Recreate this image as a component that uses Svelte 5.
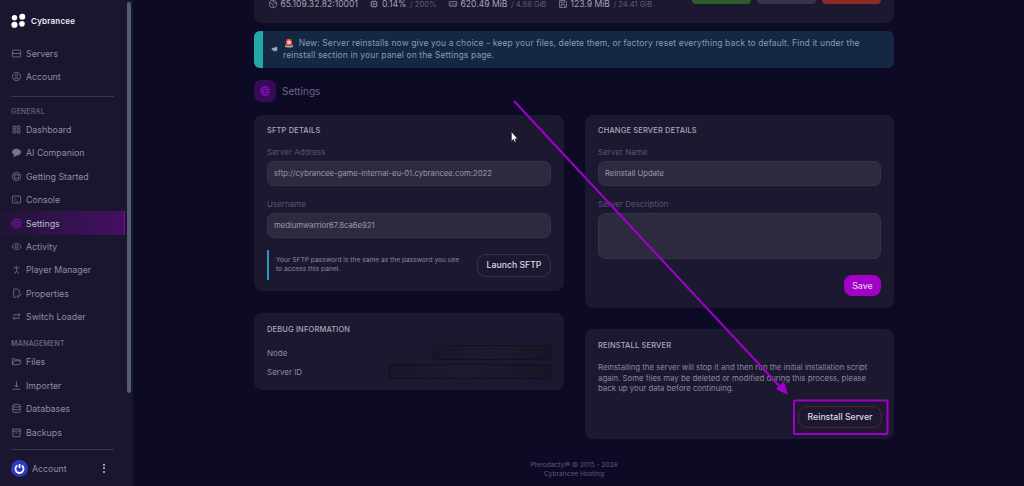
<script>
  const nav1 = [
    { label: 'Dashboard', d: 'M3 3h4v4H3zM9 3h4v4H9zM3 9h4v4H3zM9 9h4v4H9z' },
    { label: 'AI Companion', d: 'M8 3c3.300 0 6 2 6 4.500S11.300 12 8 12l-4 2 1-3C3 10 2 8.800 2 7.500 2 5 4.700 3 8 3z', fill: true },
    { label: 'Getting Started', d: 'M8 2a6 6 0 1 0 0 12A6 6 0 0 0 8 2zM8 5a3 3 0 1 0 0 6 3 3 0 0 0 0-6zM4 4l2 2M12 4l-2 2M4 12l2-2M12 12l-2-2' },
    { label: 'Console', d: 'M3 3h10a1 1 0 0 1 1 1v8a1 1 0 0 1-1 1H3a1 1 0 0 1-1-1V4a1 1 0 0 1 1-1zM5 6l2 2-2 2M8 10.500h2' },
    { label: 'Settings', active: true, d: 'M8 2a6 6 0 1 0 0 12A6 6 0 0 0 8 2zM8 5.500a2.500 2.500 0 1 0 0 5 2.500 2.500 0 0 0 0-5z' },
    { label: 'Activity', d: 'M1.500 8S4 3.500 8 3.500 14.500 8 14.500 8 12 12.500 8 12.500 1.500 8 1.500 8zM8 6a2 2 0 1 0 0 4 2 2 0 0 0 0-4z' },
    { label: 'Player Manager', d: 'M8 2v1.500M3.500 5.500h9M8 5.500v4M8 9.500L5.500 14M8 9.500l2.500 4.500' },
    { label: 'Properties', d: 'M12 7V4l-2.500-2.500H4v12h3.500M9 13.500l.5-2L13 8l1.500 1.500-3.500 3.500z' },
    { label: 'Switch Loader', d: 'M3 5.500h10M10.500 3L13 5.500 10.500 8M13 10.500H3M5.500 8L3 10.500 5.500 13' }
  ];
  const nav2 = [
    { label: 'Files', d: 'M2 12.500V4h4l1 1.500h6V7M2 12.500h10.500L14.500 7H4.500z' },
    { label: 'Importer', d: 'M8 2v8M5 7.500l3 3 3-3M2.500 13.500h11' },
    { label: 'Databases', d: 'M2.500 4c0-1.200 2.500-2 5.500-2s5.500.8 5.500 2v8c0 1.200-2.500 2-5.500 2s-5.500-.8-5.500-2zM2.500 4c0 1.200 2.500 2 5.500 2s5.500-.8 5.500-2M2.500 8c0 1.200 2.500 2 5.500 2s5.500-.8 5.500-2' },
    { label: 'Backups', d: 'M2 3h12v3H2zM3 6v8h10V6M6.500 9h3' }
  ];
</script>

{#snippet item(n)}
  <div class="nav" class:active={n.active}>
    <svg viewBox="0 0 16 16" class="ic" class:filled={n.fill}><path d={n.d} /></svg>
    <span>{n.label}</span>
  </div>
{/snippet}

<div class="page">
  <aside>
    <div class="rail">
      <div class="brand">
        <svg viewBox="0 0 16 16" class="logo">
          <circle cx="3.700" cy="4.500" r="2.900" /><circle cx="12" cy="3.400" r="3.200" />
          <circle cx="3.700" cy="12" r="3.300" /><circle cx="11.700" cy="11" r="3" />
        </svg>
        <span>Cybrancee</span>
      </div>
      <div class="top">
        <div class="nav"><svg viewBox="0 0 16 16" class="ic"><path d="M3 3h10a1 1 0 0 1 1 1v8a1 1 0 0 1-1 1H3a1 1 0 0 1-1-1V4a1 1 0 0 1 1-1zM2 8h12" /></svg><span>Servers</span></div>
        <div class="nav"><svg viewBox="0 0 16 16" class="ic"><path d="M8 2a6 6 0 1 0 0 12A6 6 0 0 0 8 2zM8 4.500a2 2 0 1 0 0 4 2 2 0 0 0 0-4zM4 12c1-2 7-2 8 0" /></svg><span>Account</span></div>
      </div>
      <div class="rule"></div>
      <div class="head">GENERAL</div>
      {#each nav1 as n}{@render item(n)}{/each}
      <div class="head mgmt">MANAGEMENT</div>
      {#each nav2 as n}{@render item(n)}{/each}
      <div class="foot">
        <div class="rule"></div>
        <div class="acct">
          <div class="avatar">
            <svg viewBox="0 0 16 16"><path d="M5.200 4.400a5 5 0 1 0 5.600 0M8 2.500v5" /></svg>
          </div>
          <span>Account</span>
          <i class="dots"><b></b><b></b><b></b></i>
        </div>
      </div>
    </div>
    <div class="track"><div class="thumb"></div></div>
  </aside>

  <main>
    <section class="stats">
      <div class="readouts">
        <span class="stat"><svg viewBox="0 0 16 16" class="ic"><path d="M8 2a6 6 0 1 0 0 12A6 6 0 0 0 8 2zM3 6l4 2 2 5M8 2l1 4 5 1" /></svg><em>65.109.32.82:10001</em></span>
        <span class="stat"><svg viewBox="0 0 16 16" class="ic"><path d="M4 4h8v8H4zM6.500 6.500h3v3h-3zM6 2v2M10 2v2M6 12v2M10 12v2M2 6h2M2 10h2M12 6h2M12 10h2" /></svg><em>0.14%</em><small>/ 200%</small></span>
        <span class="stat"><svg viewBox="0 0 16 16" class="ic"><path d="M2 4h12v7H2zM4 11v2M8 11v2M12 11v2M4.500 6.500v2M7 6.500v2M9.500 6.500v2M12 6.500v2" /></svg><em>620.49 MiB</em><small>/ 4.88 GiB</small></span>
        <span class="stat"><svg viewBox="0 0 16 16" class="ic"><path d="M2.500 2.500h9l2 2v9h-11zM5 2.500v3.500h5V2.500M5 13.500V9h6v4.500" /></svg><em>123.9 MiB</em><small>/ 24.41 GiB</small></span>
      </div>
      <div class="power">
        <div class="pw green"></div><div class="pw grey"></div><div class="pw red"></div>
      </div>
    </section>

    <section class="alert">
      <div class="stripe"></div>
      <svg viewBox="0 0 16 16" class="mega"><path d="M2 6.500v3h2l8 2.500V4L4 6.500zM5 10l.8 2.500h1.700L7 10.500" /></svg>
      <p><span class="siren">🚨</span> New: Server reinstalls now give you a choice - keep your files, delete them, or factory reset everything back to default. Find it under the reinstall section in your panel on the Settings page.</p>
    </section>

    <header class="title">
      <div class="badge">
        <svg viewBox="0 0 16 16"><path d="M8 1.800l1.300 1.500 2-.2.400 2 1.800 1-.9 1.900.9 1.900-1.800 1-.4 2-2-.2L8 14.200l-1.300-1.500-2 .2-.4-2-1.800-1 .9-1.900-.9-1.900 1.800-1 .4-2 2 .2zM8 5.500a2.500 2.500 0 1 0 0 5 2.500 2.500 0 0 0 0-5z" /></svg>
      </div>
      <h1>Settings</h1>
    </header>

    <div class="cols">
      <div class="col left">
        <section class="card sftp">
          <h2>SFTP DETAILS</h2>
          <label for="addr">Server Address</label>
          <div class="input" id="addr">sftp://cybrancee-game-internal-eu-01.cybrancee.com:2022</div>
          <label for="user" class="second">Username</label>
          <div class="input" id="user">mediumwarrior67.8ca6e921</div>
          <div class="sftp-foot">
            <p class="note">Your SFTP password is the same as the password you use to access this panel.</p>
            <div class="btn outline">Launch SFTP</div>
          </div>
        </section>
        <section class="card debug">
          <h2>DEBUG INFORMATION</h2>
          <div class="row"><span>Node</span><i class="redact short"></i></div>
          <div class="row"><span>Server ID</span><i class="redact long"></i></div>
        </section>
      </div>

      <div class="col right">
        <section class="card change">
          <h2>CHANGE SERVER DETAILS</h2>
          <label for="name">Server Name</label>
          <div class="input" id="name">Reinstall Update</div>
          <label for="desc" class="second">Server Description</label>
          <div class="input area" id="desc"></div>
          <div class="actions"><div class="btn save">Save</div></div>
        </section>
        <section class="card reinstall">
          <h2>REINSTALL SERVER</h2>
          <p>Reinstalling the server will stop it and then run the initial installation script again. Some files may be deleted or modified during this process, please back up your data before continuing.</p>
          <div class="actions"><div class="btn danger">Reinstall Server</div></div>
        </section>
      </div>
    </div>

    <footer>
      <div>Pterodactyl® © 2015 - 2026</div>
      <div>Cybrancee Hosting</div>
    </footer>
  </main>

  <svg class="overlay" viewBox="0 0 1024 486">
    <line x1="514" y1="101" x2="783" y2="390" class="shaft" />
    <polygon points="788,395 776,389 784,381" class="head-arrow" />
    <rect x="794" y="400.500" width="93.500" height="33.500" rx="1.500" class="frame" />
    <path d="M511.500 132v9l2-1.800 1.300 2.800 1.300-.6-1.300-2.700h2.700z" class="cursor" />
  </svg>
</div>

<style>
  :global(body) {
    margin: 0;
    background: #0d0a26;
    font-family: Inter, "Liberation Sans", sans-serif;
    overflow: hidden;
  }
  .page {
    position: relative;
    width: 1024px;
    height: 486px;
    display: flex;
    overflow: hidden;
    background: #0d0a26;
  }
  aside {
    width: 133px;
    flex: none;
    height: 486px;
    background: #1a162f;
    display: flex;
  }
  .rail {
    width: 125px;
    flex: none;
    display: flex;
    flex-direction: column;
    position: relative;
  }
  .track { flex: 1; padding: 2px 2px 0; }
  .thumb { width: 4px; height: 391px; background: #4f5f6d; border-radius: 2px; }
  .brand {
    display: flex;
    align-items: center;
    gap: 5px;
    height: 22px;
    margin-top: 10px;
    padding-left: 11px;
    color: #eceaf2;
    font-size: 8px;
    font-weight: 600;
    letter-spacing: 0.2px;
  }
  .logo { width: 15px; height: 16px; fill: #fff; }
  .top { margin-top: 9.500px; }
  .nav {
    height: 23.400px;
    display: flex;
    align-items: center;
    gap: 4px;
    padding-left: 11px;
    font-size: 8.800px;
    color: #8f8ba6;
    box-sizing: border-box;
  }
  .nav.active {
    color: #bdb9cf;
    background: linear-gradient(90deg, #1f1535, #450f63);
    border-right: 1px solid #8a00b8;
  }
  .ic {
    width: 11px;
    height: 11px;
    fill: none;
    stroke: currentColor;
    stroke-width: 1.200;
    flex: none;
  }
  .ic.filled { fill: currentColor; }
  .nav.active .ic { color: #8f10b8; stroke-width: 2; }
  .nav .ic { opacity: 0.8; }
  .rule { height: 1px; background: #3a364f; margin: 7.500px 11px 0 11px; width: 103px; }
  .head {
    color: #65617f;
    font-size: 7px;
    font-weight: 500;
    letter-spacing: 0.2px;
    padding-left: 11px;
    margin-top: 10px;
    margin-bottom: 2px;
    line-height: 9px;
  }
  .mgmt { margin-top: 11px; margin-bottom: 2px; font-weight: 600; }
  .foot { margin-top: 0; }
  .foot .rule { margin-top: 5px; }
  .acct {
    display: flex;
    align-items: center;
    padding: 10px 0 0 11px;
    font-size: 8.800px;
    color: #8f8ba6;
  }
  .avatar {
    width: 17px;
    height: 17px;
    border-radius: 50%;
    background: #2f3ac0;
    display: flex;
    align-items: center;
    justify-content: center;
    margin-right: 4px;
    flex: none;
  }
  .avatar svg { width: 13px; height: 13px; fill: none; stroke: #fff; stroke-width: 2.200; }
  .dots { margin-left: 36px; display: flex; flex-direction: column; gap: 1.500px; }
  .dots b { width: 2px; height: 2px; border-radius: 50%; background: #c9c6d6; }

  main {
    flex: none;
    width: 640px;
    margin-left: 121px;
    display: flex;
    flex-direction: column;
  }
  .stats {
    height: 23px;
    background: #1c1830;
    border-radius: 0 0 8px 8px;
    display: flex;
    justify-content: space-between;
    padding: 0 13px 0 14px;
    box-sizing: border-box;
    flex: none;
  }
  .readouts { display: flex; gap: 11.500px; height: 8px; align-items: center; }
  .stat { display: flex; align-items: center; gap: 2.500px; font-size: 8.600px; color: #a5a2b8; white-space: nowrap; }
  .stat .ic { width: 10px; height: 10px; stroke-width: 1.200; color: #8f8ba6; }
  .stat em { font-style: normal; }
  .stat small { font-size: 7.600px; color: #5f5b76; margin-left: 1px; }
  .power { display: flex; gap: 5.500px; }
  .pw { width: 59.500px; height: 4px; border-radius: 0 0 6px 6px; }
  .green { background: #2e5d2c; }
  .grey { background: #37344a; }
  .red { background: #8f2a27; }

  .alert {
    margin-top: 8px;
    height: 37px;
    flex: none;
    background: #142844;
    border-radius: 6px;
    display: flex;
    align-items: center;
    overflow: hidden;
    position: relative;
  }
  .stripe { width: 8.500px; height: 100%; background: #22a8a8; flex: none; }
  .mega {
    position: absolute;
    left: 17px;
    top: 14px;
    width: 8px;
    height: 8px;
    fill: #a4a9bf;
    stroke: #a4a9bf;
    stroke-width: 1;
  }
  .alert p {
    margin: 1px 0 0;
    padding-left: 20.500px;
    font-size: 8.500px;
    line-height: 11.700px;
    color: #8f96b0;
    letter-spacing: 0.12px;
    width: 600px;
  }
  .siren { font-size: 8px; margin-left: 1px; margin-right: 2px; display: inline-block; line-height: 8px; }

  .title {
    margin-top: 12px;
    height: 22px;
    display: flex;
    align-items: center;
    gap: 6px;
    flex: none;
  }
  .badge {
    width: 22px;
    height: 22px;
    border-radius: 7px;
    background: #380a5a;
    display: flex;
    align-items: center;
    justify-content: center;
  }
  .badge svg { width: 12px; height: 12px; fill: none; stroke: #8f10c8; stroke-width: 1.500; }
  h1 { margin: 0; font-size: 10px; font-weight: 400; color: #6c6888; }

  .cols { display: grid; grid-template-columns: 310px 309px; gap: 21px; margin-top: 13px; }
  .col { display: flex; flex-direction: column; }
  .left { gap: 22px; }
  .right { gap: 21px; }
  .card {
    background: #1c1830;
    border-radius: 8px;
    padding: 11px 13px;
    box-sizing: border-box;
  }
  .debug, .reinstall { padding-top: 12px; }
  h2 {
    margin: 0;
    font-size: 7.500px;
    line-height: 9px;
    font-weight: 500;
    letter-spacing: 0.15px;
    color: #aaa7bc;
  }
  label {
    display: block;
    margin-top: 12px;
    font-size: 8px;
    line-height: 10px;
    color: #58537a;
  }
  label.second { margin-top: 13px; }
  .input {
    margin-top: 4px;
    height: 25px;
    box-sizing: border-box;
    border: 1px solid #37344a;
    border-radius: 7px;
    background: #2d2a3f;
    font-size: 7.700px;
    color: #9b98ad;
    display: flex;
    align-items: center;
    padding-left: 6px;
  }
  .input.area { height: 46px; }
  .sftp { height: 176px; }
  .sftp-foot { display: flex; align-items: center; justify-content: space-between; margin-top: 12px; }
  .note {
    margin: 0;
    width: 200px;
    height: 30px;
    box-sizing: border-box;
    border-left: 2px solid #1f9cc4;
    padding: 6px 0 0 7px;
    font-size: 6.650px;
    line-height: 9px;
    color: #8c88a4;
  }
  .btn {
    display: flex;
    align-items: center;
    justify-content: center;
    font-weight: 500;
    color: #dcdae6;
    box-sizing: border-box;
  }
  .outline {
    width: 74px;
    height: 23px;
    border: 1px solid #36334c;
    border-radius: 9px;
    font-size: 8.700px;
  }
  .debug { height: 77px; }
  .row {
    display: flex;
    justify-content: space-between;
    align-items: center;
    height: 15px;
    margin-top: 4px;
    font-size: 8px;
    color: #8f8ba6;
  }
  .debug h2 + .row { margin-top: 11px; }
  .redact {
    height: 15px;
    box-sizing: border-box;
    background: linear-gradient(90deg, #171527, #1d1a2e 45%, #1a1829 70%, #171424);
    border: 1px solid #111021;
    border-radius: 1px;
    display: block;
  }
  .short { width: 118px; }
  .long { width: 162px; }
  .change { height: 193px; }
  .actions { display: flex; justify-content: flex-end; }
  .change .actions { margin-top: 16px; }
  .save {
    width: 37px;
    height: 21px;
    border-radius: 8px;
    background: #a202c8;
    color: #e6c8ef;
    font-size: 8.800px;
  }
  .reinstall { height: 110px; }
  .reinstall p {
    margin: 12px 0 0;
    font-size: 7.800px;
    line-height: 10.600px;
    color: #8c889f;
    width: 282px;
  }
  .reinstall .actions { margin-top: 12px; margin-right: -1px; }
  .danger {
    width: 84px;
    height: 22.500px;
    border: 1px solid #5e2038;
    border-radius: 9px;
    font-size: 8.700px;
  }
  footer {
    margin-top: 22px;
    text-align: center;
    font-size: 6.600px;
    line-height: 8.700px;
    color: #5e5a7c;
  }
  .overlay { position: absolute; inset: 0; width: 1024px; height: 486px; pointer-events: none; }
  .shaft { stroke: #a000cc; stroke-width: 2; }
  .head-arrow { fill: #a000cc; }
  .frame { fill: none; stroke: #a000cc; stroke-width: 2; }
  .cursor { fill: #fff; stroke: #222; stroke-width: 0.400; }
</style>
